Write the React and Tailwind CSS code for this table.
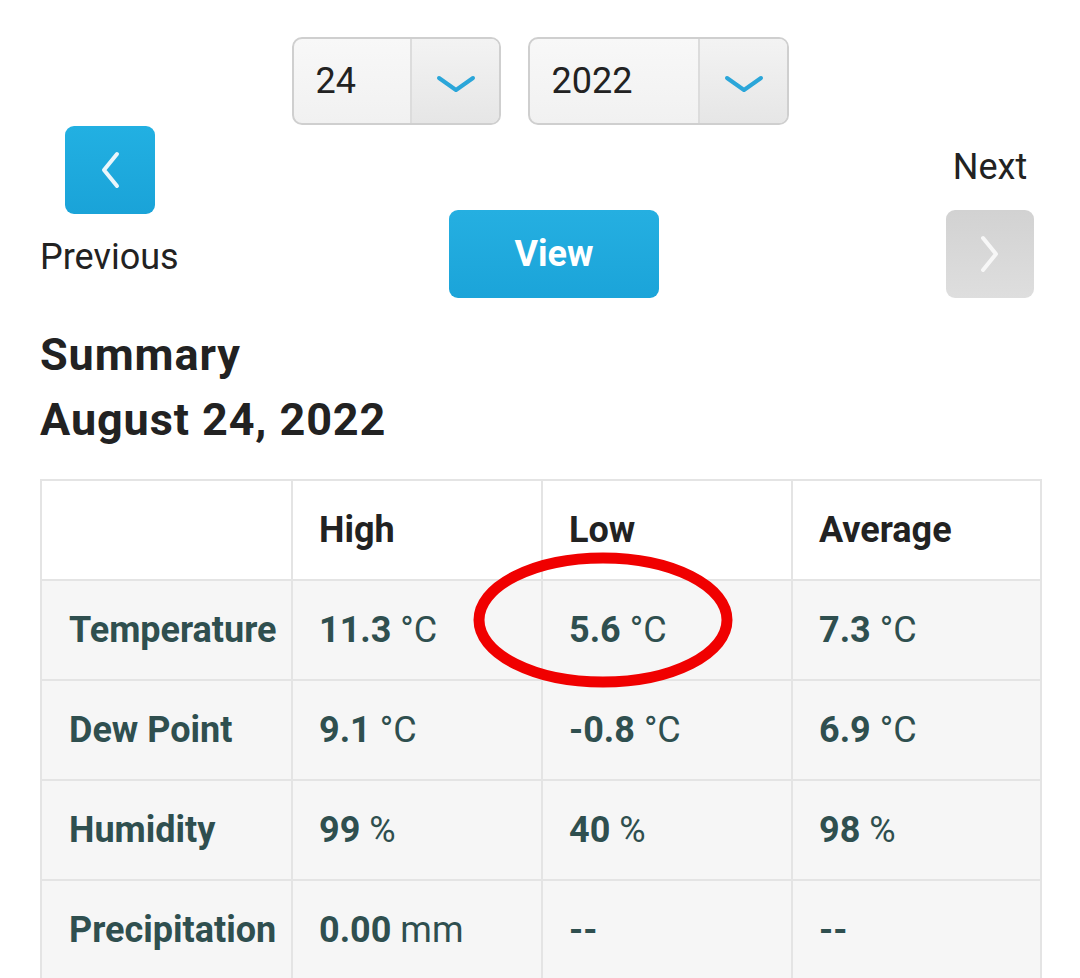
import React from "react";

const font = { fontFamily: "Roboto, 'Noto Sans', Arial, sans-serif" };

function Chevron({ dir = "down", className = "", color = "#fff", w = 4 }) {
  if (dir === "down") {
    return (
      <svg width="40" height="20" viewBox="0 0 40 20" className={className}>
        <polyline points="3,4 20,16 37,4" fill="none" stroke={color} strokeWidth={w} strokeLinecap="round" strokeLinejoin="round" />
      </svg>
    );
  }
  const pts = dir === "left" ? "18,3 5,19 18,35" : "4,3 17,19 4,35";
  return (
    <svg width="22" height="38" viewBox="0 0 22 38" className={className}>
      <polyline points={pts} fill="none" stroke={color} strokeWidth={w} strokeLinecap="round" strokeLinejoin="round" />
    </svg>
  );
}

function Select({ value, leftW }) {
  return (
    <div className="flex h-[88px] rounded-[10px] border-2 border-[#cfcfcf] bg-gradient-to-b from-[#f8f8f8] to-[#f1f1f1] overflow-hidden">
      <div className={`${leftW} flex items-center pl-[22px] text-[36px] text-[#222]`}>{value}</div>
      <div className="w-[89px] border-l-2 border-[#dcdcdc] bg-gradient-to-b from-[#f3f3f3] to-[#e6e6e6] flex items-center justify-center">
        <Chevron dir="down" color="#2ba6d9" w={4} className="mt-[6px] ml-[2px]" />
      </div>
    </div>
  );
}

const rows = [
  ["Temperature", ["11.3", "°C"], ["5.6", "°C"], ["7.3", "°C"]],
  ["Dew Point", ["9.1", "°C"], ["-0.8", "°C"], ["6.9", "°C"]],
  ["Humidity", ["99", "%"], ["40", "%"], ["98", "%"]],
  ["Precipitation", ["0.00", "mm"], ["--", ""], ["--", ""]],
];

function Val({ v }) {
  return (
    <span>
      <span className="font-bold">{v[0]}</span>
      {v[1] ? <span className="font-normal"> {v[1]}</span> : null}
    </span>
  );
}

export default function App() {
  return (
    <div className="w-[1080px] h-[978px] bg-white overflow-hidden relative" style={font}>
      <div className="flex justify-center gap-[27px] pt-[37px]">
        <Select value="24" leftW="w-[116px]" />
        <Select value="2022" leftW="w-[168px]" />
      </div>

      <div className="flex items-start pl-[40px] mt-[1px]">
        <div className="w-[140px] flex flex-col">
          <div className="ml-[25px] w-[90px] h-[88px] rounded-[9px] bg-gradient-to-b from-[#22b0e2] to-[#1aa3d8] flex items-center justify-center">
            <Chevron dir="left" color="#eaf6fb" w={4} />
          </div>
          <div className="mt-[22px] text-[36px] leading-[42px] text-[#222] whitespace-nowrap">Previous</div>
        </div>
        <div className="ml-[269px] mt-[84px] w-[210px] h-[88px] rounded-[9px] bg-gradient-to-b from-[#25afe1] to-[#1ba4d9] flex items-center justify-center text-white font-bold text-[36px]">
          View
        </div>
        <div className="ml-auto mr-[46px] flex flex-col items-center w-[88px]">
          <div className="mt-[20px] text-[36px] leading-[42px] text-[#222]">Next</div>
          <div className="mt-[22px] w-[88px] h-[88px] rounded-[9px] bg-gradient-to-b from-[#d2d2d2] to-[#dedede] flex items-center justify-center">
            <Chevron dir="right" color="#f7f7f7" w={4} />
          </div>
        </div>
      </div>

      <div className="pl-[40px] mt-[24px] text-[45px] leading-[65px] font-bold text-[#222] tracking-[0.02em]">
        <div>Summary</div>
        <div>August 24, 2022</div>
      </div>

      <div className="ml-[40px] mt-[27px] w-[1002px] border-2 border-[#e4e4e4]">
        <div className="grid grid-cols-[249px_250px_250px_249px] h-[98px] bg-white text-[36px] font-bold text-[#222]">
          <div></div>
          <div className="border-l-2 border-[#e4e4e4] flex items-center pl-[26px]">High</div>
          <div className="border-l-2 border-[#e4e4e4] flex items-center pl-[26px]">Low</div>
          <div className="border-l-2 border-[#e4e4e4] flex items-center pl-[26px]">Average</div>
        </div>
        {rows.map((r) => (
          <div key={r[0]} className="grid grid-cols-[249px_250px_250px_249px] h-[100px] border-t-2 border-[#e4e4e4] bg-[#f6f6f6] text-[36px] text-[#2f4f4f]">
            <div className="flex items-center pl-[27px] font-bold whitespace-nowrap">{r[0]}</div>
            {r.slice(1).map((v, i) => (
              <div key={i} className="border-l-2 border-[#e4e4e4] flex items-center pl-[26px] whitespace-nowrap">
                <Val v={v} />
              </div>
            ))}
          </div>
        ))}
      </div>

      <svg className="absolute left-[468px] top-[547px]" width="270" height="146" viewBox="0 0 270 146">
        <ellipse cx="135" cy="73" rx="124" ry="62" fill="none" stroke="#f00000" strokeWidth="11" />
      </svg>
    </div>
  );
}
